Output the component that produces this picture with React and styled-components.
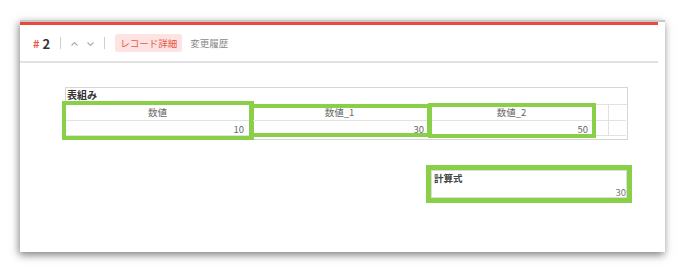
import { createGlobalStyle, styled } from 'styled-components'

const GlobalStyle = createGlobalStyle`
  html, body {
    margin: 0;
    background: #ffffff;
    font-family: "Noto Sans CJK JP", "Open Sans", sans-serif;
  }
`

const Page = styled.div`
  width: 685px;
  height: 272px;
  padding: 20px 0 0 20px;
  box-sizing: border-box;
`

const Card = styled.div`
  width: 645px;
  height: 232px;
  background: #fff;
  border-top: 2px solid #c9c9c9;
  box-sizing: border-box;
  box-shadow: -1px 3px 8px rgba(0, 0, 0, 0.5);
`

const Inner = styled.div`
  width: 638px;
`

const RedBar = styled.div`
  height: 3px;
  background: #ea4a3d;
`

const Toolbar = styled.div`
  height: 36px;
  display: flex;
  align-items: center;
  padding-left: 13px;
  border-bottom: 2px solid #e1e1e1;
`

const RecordNo = styled.div`
  font-size: 13px;
  font-weight: 700;
  color: #333;
  display: flex;
  align-items: center;
  gap: 3px;
  span { color: #e8584a; font-size: 11px; }
`

const Sep = styled.div`
  width: 1px;
  height: 12px;
  background: #cfcfcf;
  margin: 0 10px;
`

const Chevrons = styled.div`
  display: flex;
  gap: 9px;
  padding-top: 1px;
`

const Tab = styled.div`
  height: 18px;
  padding: 0 5px;
  display: flex;
  align-items: center;
  font-size: 9.5px;
  border-radius: 3px;
  margin-right: 3px;
  color: ${({ $active }) => ($active ? '#e8584a' : '#8a8a8a')};
  background: ${({ $active }) => ($active ? '#fde3e1' : 'transparent')};
`

const Body = styled.div`
  display: flex;
  flex-direction: column;
  align-items: flex-start;
  padding: 24px 0 0 45px;
`

const Table = styled.div`
  width: 563px;
  border: 1px solid #d6d6d6;
  box-sizing: border-box;
  padding-bottom: 3px;
`

const TableLabel = styled.div`
  height: 16px;
  padding-left: 1px;
  font-size: 10px;
  font-weight: 700;
  color: #333;
  line-height: 13px;
`

const SubTable = styled.div`
  display: flex;
  border-top: 1px solid #e2e2e2;
`

const Column = styled.div`
  width: ${({ $w }) => $w}px;
  display: flex;
  flex-direction: column;
  position: relative;
  z-index: ${({ $mark }) => ($mark ? 1 : 0)};
  outline: ${({ $mark }) => ($mark ? '4.5px solid #8acf48' : 'none')};
  outline-offset: ${({ $off }) => $off || 0}px;
`

const HeadCell = styled.div`
  height: 16px;
  box-sizing: border-box;
  border-right: 1px solid #e2e2e2;
  border-bottom: 1px solid #e2e2e2;
  font-size: 9.5px;
  color: #666;
  text-align: center;
  line-height: 14px;
`

const DataCell = styled.div`
  height: 15px;
  box-sizing: border-box;
  border-right: 1px solid #e2e2e2;
  border-bottom: 1px solid #e2e2e2;
  font-size: 9.5px;
  color: #666;
  text-align: right;
  padding-right: 5px;
  line-height: 16px;
`

const Field = styled.div`
  margin: 30px 0 0 366px;
  width: 196px;
  height: 28px;
  border: 1px solid #dcdcdc;
  box-sizing: border-box;
  outline: 5px solid #8acf48;
  display: flex;
  flex-direction: column;
  justify-content: space-between;
  padding: 2px 0 0 2px;
`

const FieldLabel = styled.div`
  font-size: 9.5px;
  font-weight: 700;
  color: #444;
  line-height: 11px;
`

const FieldValue = styled.div`
  font-size: 9.5px;
  color: #777;
  text-align: right;
  line-height: 10px;
`

const Chevron = ({ up }) => (
  <svg width="7" height="6" viewBox="0 0 7 6">
    <path d={up ? 'M0.5 4.5 L3.5 1.5 L6.5 4.5' : 'M0.5 1.5 L3.5 4.5 L6.5 1.5'} fill="none" stroke="#aaa" strokeWidth="1.1" />
  </svg>
)

const columns = [
  { label: '数値', value: '10', w: 184, off: 0 },
  { label: '数値_1', value: '30', w: 180, off: -3 },
  { label: '数値_2', value: '50', w: 164, off: -2 },
]

export default function App() {
  return (
    <Page>
      <GlobalStyle />
      <Card>
        <Inner>
          <RedBar />
          <Toolbar>
            <RecordNo><span>#</span>2</RecordNo>
            <Sep />
            <Chevrons>
              <Chevron up />
              <Chevron />
            </Chevrons>
            <Sep />
            <Tab $active>レコード詳細</Tab>
            <Tab>変更履歴</Tab>
          </Toolbar>
          <Body>
            <Table>
              <TableLabel>表組み</TableLabel>
              <SubTable>
                {columns.map((c) => (
                  <Column key={c.label} $w={c.w} $mark $off={c.off}>
                    <HeadCell>{c.label}</HeadCell>
                    <DataCell>{c.value}</DataCell>
                  </Column>
                ))}
                <Column $w={15}>
                  <HeadCell />
                  <DataCell />
                </Column>
                <Column $w={17}>
                  <HeadCell style={{ borderRight: 'none' }} />
                  <DataCell style={{ borderRight: 'none' }} />
                </Column>
              </SubTable>
            </Table>
            <Field>
              <FieldLabel>計算式</FieldLabel>
              <FieldValue>30</FieldValue>
            </Field>
          </Body>
        </Inner>
      </Card>
    </Page>
  )
}
